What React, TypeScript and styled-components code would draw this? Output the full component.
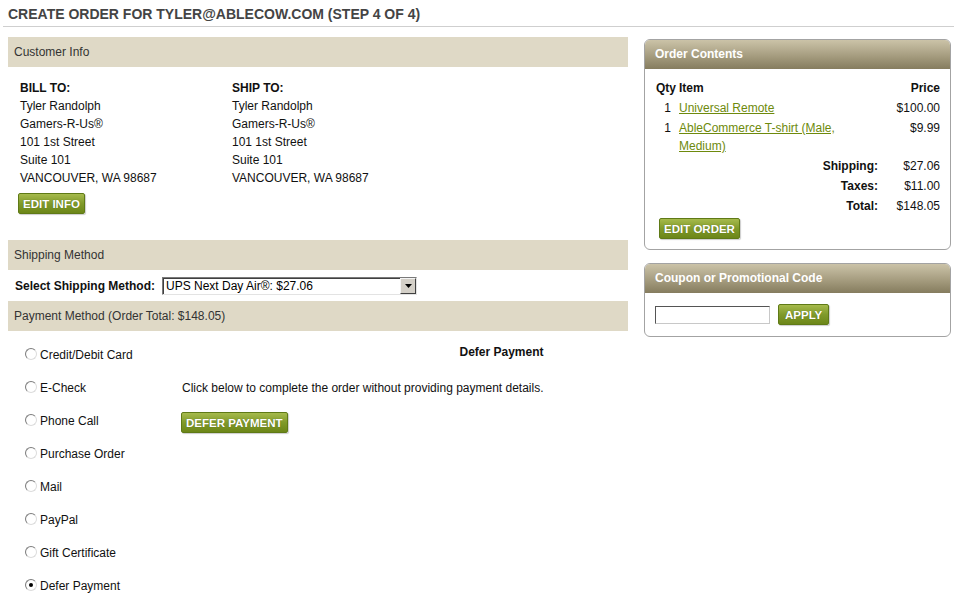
import React from 'react';
import styled, { createGlobalStyle } from 'styled-components';

const GlobalStyle = createGlobalStyle`
  * { box-sizing: border-box; }
  body {
    margin: 0;
    background: #fff;
    font-family: "Liberation Sans", Arial, sans-serif;
    font-size: 12px;
    color: #111;
  }
`;

const Page = styled.div`
  width: 954px;
`;

const PageTitle = styled.h1`
  margin: 0 0 0 3px;
  padding: 6px 5px 4px;
  font-size: 14px;
  line-height: 16px;
  font-weight: bold;
  color: #444;
  border-bottom: 1px solid #cfcfcf;
`;

const Main = styled.div`
  display: flex;
  align-items: flex-start;
  gap: 16px;
  padding: 10px 0 0 8px;
`;

const LeftColumn = styled.div`
  width: 620px;
`;

const RightColumn = styled.div`
  width: 307px;
  margin-top: 2px;
  display: flex;
  flex-direction: column;
  gap: 13px;
`;

const SectionBar = styled.div`
  height: 30px;
  line-height: 30px;
  padding-left: 6px;
  background: #dfd9c6;
  color: #333;
`;

const ActionButton = styled.button<{ $wide?: boolean }>`
  height: 21px;
  padding: 0 ${(p) => (p.$wide ? 6 : 4)}px;
  border: 1px solid #5f7a16;
  border-radius: 2px;
  background: linear-gradient(#a6ba4c, #809a2a 50%, #6c8618);
  color: #fff;
  font: bold 11.5px "Liberation Sans", Arial, sans-serif;
  text-transform: uppercase;
  text-shadow: 0 0 1px rgba(0, 0, 0, 0.35);
  box-shadow: 1px 1px 1px rgba(0, 0, 0, 0.2);
  cursor: pointer;
`;

/* customer info */

const CustomerBody = styled.div`
  padding: 12px 0 26px 10px;
`;

const AddressRow = styled.div`
  display: flex;
`;

const AddressBlock = styled.div`
  width: 212px;
  padding-left: 2px;
  line-height: 18px;
`;

const AddressHeading = styled.div`
  font-weight: bold;
`;

const EditInfoButton = styled(ActionButton)`
  margin-top: 6px;
`;

/* shipping */

const ShippingRow = styled.div`
  height: 31px;
  display: flex;
  align-items: center;
  padding-left: 7px;
`;

const ShippingLabel = styled.label`
  font-weight: bold;
  margin-right: 7px;
`;

const SelectBox = styled.div`
  width: 255px;
  height: 18px;
  display: flex;
  border: 1px solid;
  border-color: #7a7a7a #e3e3e3 #e3e3e3 #7a7a7a;
  background: #fff;
  box-shadow: inset 1px 1px 0 #404040;
`;

const SelectValue = styled.select`
  flex: 1;
  min-width: 0;
  appearance: none;
  border: 0;
  outline: 0;
  background: transparent;
  padding: 0 0 0 3px;
  font: 12px "Liberation Sans", Arial, sans-serif;
  color: #000;
`;

const SelectArrow = styled.span`
  width: 16px;
  height: 16px;
  display: flex;
  align-items: center;
  justify-content: center;
  background: #d4d0c8;
  border: 1px solid;
  border-color: #f4f4f4 #404040 #404040 #f4f4f4;
`;

/* payment */

const PaymentBody = styled.div`
  display: flex;
  align-items: flex-start;
`;

const PaymentList = styled.div`
  width: 172px;
  padding: 8px 0 0 17px;
`;

const PaymentOption = styled.label`
  height: 33px;
  display: flex;
  align-items: center;
  gap: 3px;
  line-height: 33px;
`;

const Radio = styled.span<{ $checked?: boolean }>`
  width: 12px;
  height: 12px;
  margin-top: -4px;
  border-radius: 50%;
  border: 1px solid;
  border-color: #7d7d7d #dcdcdc #dcdcdc #7d7d7d;
  background: radial-gradient(circle at 60% 60%, #fff 55%, #eaeaea);
  display: flex;
  align-items: center;
  justify-content: center;
  &::after {
    content: '';
    width: 4px;
    height: 4px;
    border-radius: 50%;
    background: ${(p) => (p.$checked ? '#000' : 'transparent')};
  }
`;

const PaymentDetail = styled.div`
  padding-top: 12px;
  display: flex;
  flex-direction: column;
  align-items: flex-start;
`;

const DetailHeading = styled.div`
  align-self: stretch;
  text-align: right;
  font-weight: bold;
  line-height: 18px;
`;

const DetailText = styled.div`
  margin-top: 18px;
  padding-left: 2px;
  line-height: 18px;
`;

const DeferButton = styled(ActionButton)`
  margin: 15px 0 0 1px;
`;

/* side panels */

const Panel = styled.section`
  border: 1px solid #a3a3a3;
  border-radius: 6px;
  overflow: hidden;
  background: #fff;
`;

const PanelHeader = styled.h2`
  margin: 0;
  height: 29px;
  line-height: 29px;
  padding-left: 10px;
  font-size: 12px;
  font-weight: bold;
  color: #fff;
  background: linear-gradient(#cbc3a8, #a9a083 50%, #857c5e);
`;

const OrderBody = styled.div`
  padding: 9px 10px 10px 11px;
`;

const ItemsTable = styled.table`
  width: 100%;
  border-collapse: collapse;
  font-size: 12px;
  table-layout: fixed;
  th, td {
    padding: 1px 0;
    line-height: 18px;
    vertical-align: top;
  }
  th {
    font-weight: bold;
  }
`;

const QtyCell = styled.td`
  width: 23px;
  text-align: center;
  th& {
    text-align: left;
  }
`;

const ItemCell = styled.td`
  text-align: left;
`;

const PriceCell = styled.td`
  width: 62px;
  text-align: right;
`;

const TotalLabel = styled.td`
  text-align: right;
  font-weight: bold;
`;

const ItemLink = styled.a`
  color: #6e8a0c;
  text-decoration: underline;
`;

const EditOrderButton = styled(ActionButton)`
  margin: 2px 0 0 3px;
`;

const CouponBody = styled.div`
  display: flex;
  align-items: center;
  gap: 8px;
  padding: 11px 10px 11px 10px;
`;

const CouponInput = styled.input`
  width: 115px;
  height: 18px;
  border: 1px solid;
  border-color: #555 #c8c8c8 #c8c8c8 #555;
  padding: 0 3px;
  font: 12px "Liberation Sans", Arial, sans-serif;
`;

const paymentMethods = [
  'Credit/Debit Card',
  'E-Check',
  'Phone Call',
  'Purchase Order',
  'Mail',
  'PayPal',
  'Gift Certificate',
  'Defer Payment',
];

const address = [
  'Tyler Randolph',
  'Gamers-R-Us®',
  '101 1st Street',
  'Suite 101',
  'VANCOUVER, WA 98687',
];

export default function App() {
  return (
    <Page>
      <GlobalStyle />
      <PageTitle>CREATE ORDER FOR TYLER@ABLECOW.COM (STEP 4 OF 4)</PageTitle>
      <Main>
        <LeftColumn>
          <SectionBar>Customer Info</SectionBar>
          <CustomerBody>
            <AddressRow>
              <AddressBlock>
                <AddressHeading>BILL TO:</AddressHeading>
                {address.map((line) => (
                  <div key={line}>{line}</div>
                ))}
              </AddressBlock>
              <AddressBlock>
                <AddressHeading>SHIP TO:</AddressHeading>
                {address.map((line) => (
                  <div key={line}>{line}</div>
                ))}
              </AddressBlock>
            </AddressRow>
            <EditInfoButton>Edit Info</EditInfoButton>
          </CustomerBody>

          <SectionBar>Shipping Method</SectionBar>
          <ShippingRow>
            <ShippingLabel>Select Shipping Method:</ShippingLabel>
            <SelectBox>
              <SelectValue defaultValue="next">
                <option value="next">UPS Next Day Air®: $27.06</option>
              </SelectValue>
              <SelectArrow>
                <svg width="7" height="4" viewBox="0 0 7 4">
                  <path d="M0 0h7L3.5 4z" fill="#000" />
                </svg>
              </SelectArrow>
            </SelectBox>
          </ShippingRow>

          <SectionBar>Payment Method (Order Total: $148.05)</SectionBar>
          <PaymentBody>
            <PaymentList>
              {paymentMethods.map((m) => (
                <PaymentOption key={m}>
                  <Radio $checked={m === 'Defer Payment'} />
                  {m}
                </PaymentOption>
              ))}
            </PaymentList>
            <PaymentDetail>
              <DetailHeading>Defer Payment</DetailHeading>
              <DetailText>Click below to complete the order without providing payment details.</DetailText>
              <DeferButton>Defer Payment</DeferButton>
            </PaymentDetail>
          </PaymentBody>
        </LeftColumn>

        <RightColumn>
          <Panel>
            <PanelHeader>Order Contents</PanelHeader>
            <OrderBody>
              <ItemsTable>
                <thead>
                  <tr>
                    <QtyCell as="th">Qty</QtyCell>
                    <ItemCell as="th">Item</ItemCell>
                    <PriceCell as="th">Price</PriceCell>
                  </tr>
                </thead>
                <tbody>
                  <tr>
                    <QtyCell>1</QtyCell>
                    <ItemCell><ItemLink href="#">Universal Remote</ItemLink></ItemCell>
                    <PriceCell>$100.00</PriceCell>
                  </tr>
                  <tr>
                    <QtyCell>1</QtyCell>
                    <ItemCell><ItemLink href="#">AbleCommerce T-shirt (Male, Medium)</ItemLink></ItemCell>
                    <PriceCell>$9.99</PriceCell>
                  </tr>
                  <tr>
                    <TotalLabel colSpan={2}>Shipping:</TotalLabel>
                    <PriceCell>$27.06</PriceCell>
                  </tr>
                  <tr>
                    <TotalLabel colSpan={2}>Taxes:</TotalLabel>
                    <PriceCell>$11.00</PriceCell>
                  </tr>
                  <tr>
                    <TotalLabel colSpan={2}>Total:</TotalLabel>
                    <PriceCell>$148.05</PriceCell>
                  </tr>
                </tbody>
              </ItemsTable>
              <EditOrderButton>Edit Order</EditOrderButton>
            </OrderBody>
          </Panel>

          <Panel>
            <PanelHeader>Coupon or Promotional Code</PanelHeader>
            <CouponBody>
              <CouponInput type="text" />
              <ActionButton $wide>Apply</ActionButton>
            </CouponBody>
          </Panel>
        </RightColumn>
      </Main>
    </Page>
  );
}
